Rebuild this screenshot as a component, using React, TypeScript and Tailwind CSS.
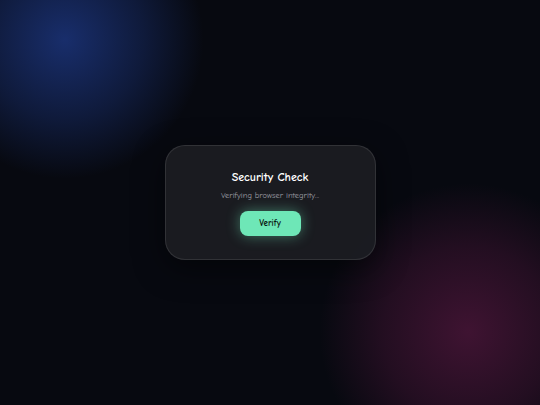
import React from "react";

export default function App() {
  return (
    <div
      className="relative w-[540px] h-[405px] overflow-hidden bg-[#070910] flex items-center justify-center"
      style={{ fontFamily: '"Comic Sans MS", "Comic Neue", cursive' }}
    >
      <div className="absolute w-[280px] h-[280px] -left-[75px] -top-[100px] rounded-full bg-[radial-gradient(circle,rgba(30,58,138,0.75)_0%,rgba(30,58,138,0.35)_40%,rgba(30,58,138,0)_70%)]" />
      <div className="absolute w-[300px] h-[300px] left-[318px] top-[182px] rounded-full bg-[radial-gradient(circle,rgba(100,26,72,0.6)_0%,rgba(100,26,72,0.3)_40%,rgba(100,26,72,0)_70%)]" />
      <div className="relative w-[211px] h-[115px] rounded-[20px] bg-[#1b1c22]/95 border border-white/10 shadow-[0_8px_30px_rgba(0,0,0,0.5)] flex flex-col items-center pt-[23px]">
        <div className="text-[12px] font-bold text-white leading-[16px]">Security Check</div>
        <div className="mt-[4px] text-[8.5px] text-[#9a9ca3] leading-[12px]">Verifying browser integrity...</div>
        <button className="mt-[10px] w-[61px] h-[25px] rounded-[8px] bg-[#6ee7b7] text-[#0b1a14] text-[9px] font-bold shadow-[0_0_14px_rgba(110,231,183,0.45)]">
          Verify
        </button>
      </div>
    </div>
  );
}
